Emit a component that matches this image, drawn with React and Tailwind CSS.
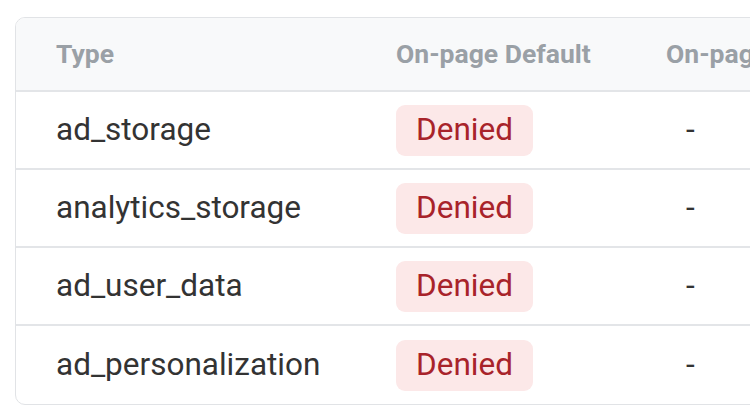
import React from "react";

const rows = ["ad_storage", "analytics_storage", "ad_user_data", "ad_personalization"];

export default function App() {
    return (
        <div className="w-[750px] h-[420px] bg-white overflow-hidden pt-[17px] pl-[15px]" style={{ fontFamily: "Roboto, 'Liberation Sans', sans-serif" }}>
            <div className="w-[800px] rounded-[10px] border border-[#e1e3e6] overflow-hidden">
                <div className="flex h-[74px] items-center bg-[#f8f9fa] border-b-2 border-[#e3e5e8] text-[26.5px] font-bold text-[#9aa0a6] whitespace-nowrap">
                    <div className="w-[340px] shrink-0 pl-[40px]">Type</div>
                    <div className="w-[270px] shrink-0 pl-[40px]">On-page Default</div>
                    <div className="shrink-0 pl-[40px]">On-page Update</div>
                </div>
                {rows.map((r, i) => (
                    <div key={r} className={"flex h-[78px] items-center text-[#333] text-[31.5px] whitespace-nowrap " + (i < rows.length - 1 ? "border-b-2 border-[#e3e5e8]" : "")}>
                        <div className="w-[340px] shrink-0 pl-[40px]">{r}</div>
                        <div className="w-[270px] shrink-0 pl-[40px]">
                            <span className="inline-flex h-[51px] w-[137px] items-center justify-center rounded-[9px] bg-[#fce8e8] text-[#a8232a]">Denied</span>
                        </div>
                        <div className="shrink-0 pl-[60px]">-</div>
                    </div>
                ))}
            </div>
        </div>
    );
}
